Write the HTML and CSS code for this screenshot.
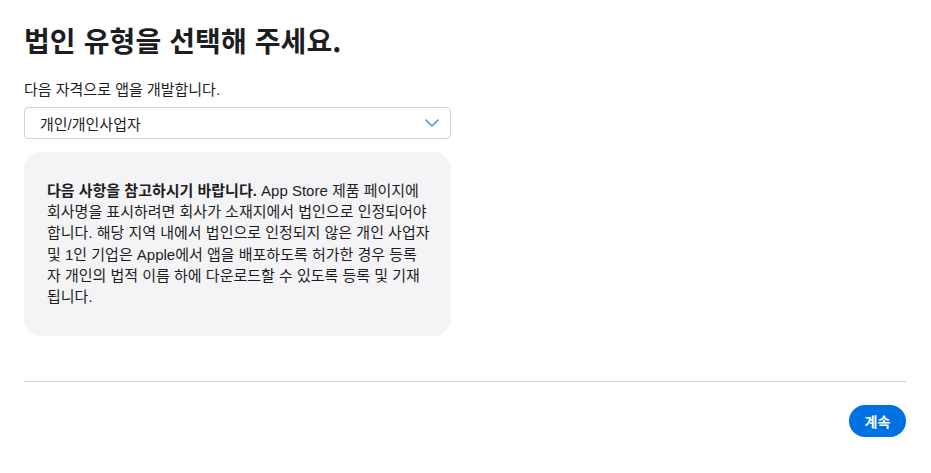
FILE: index.html
```html
<!DOCTYPE html>
<html lang="ko">
<head>
  <meta charset="UTF-8">
  <meta name="viewport" content="width=device-width, initial-scale=1">
  <title>법인 유형 선택</title>
  <link rel="stylesheet" href="styles.css">
</head>
<body>
  <main class="page">
    <h1 class="title">법인 유형을 선택해 주세요.</h1>

    <section class="form">
      <label class="field-label" for="entity">다음 자격으로 앱을 개발합니다.</label>
      <div class="select">
        <span class="select-value" id="entity">개인/개인사업자</span>
        <svg class="chevron" width="14" height="8" viewBox="0 0 14 8" aria-hidden="true">
          <path d="M1 1l6 6 6-6" fill="none" stroke="#3a9ee4" stroke-width="1.6" stroke-linecap="round" stroke-linejoin="round"/>
        </svg>
      </div>

      <div class="notice">
        <p><strong>다음 사항을 참고하시기 바랍니다.</strong> App Store 제품 페이지에<br>
        회사명을 표시하려면 회사가 소재지에서 법인으로 인정되어야<br>
        합니다. 해당 지역 내에서 법인으로 인정되지 않은 개인 사업자<br>
        및 1인 기업은 Apple에서 앱을 배포하도록 허가한 경우 등록<br>
        자 개인의 법적 이름 하에 다운로드할 수 있도록 등록 및 기재<br>
        됩니다.</p>
      </div>
    </section>

    <footer class="actions">
      <button class="btn-primary">계속</button>
    </footer>
  </main>
</body>
</html>
```

FILE: styles.css
```css
:root {
  --text: #1d1d1f;
  --border: #d2d2d7;
  --accent: #0071e3;
  --panel: #f4f4f6;
}
*, *::before, *::after { box-sizing: border-box; margin: 0; padding: 0; }
body {
  background: #fff;
  color: var(--text);
  font-family: "Liberation Sans", "Noto Sans CJK KR", sans-serif;
}
.page {
  padding: 21px 25px 0 24px;
}
.title {
  font-family: "Noto Sans CJK KR", sans-serif;
  font-size: 28px;
  font-weight: 700;
  line-height: 38px;
  letter-spacing: 0.1px;
  margin-bottom: 21px;
}
.form {
  width: 427px;
}
.field-label {
  display: block;
  font-size: 15px;
  line-height: 20px;
  margin-bottom: 7px;
}
.select {
  height: 32px;
  border: 1px solid var(--border);
  border-radius: 4px;
  display: flex;
  align-items: center;
  justify-content: space-between;
  padding: 0 11px 0 15px;
  font-size: 15px;
}
.notice {
  margin-top: 13px;
  background: var(--panel);
  border-radius: 18px;
  padding: 28px 6px 29px 23px;
  font-size: 15px;
  line-height: 21.2px;
  white-space: nowrap;
}
.notice strong { font-weight: 700; }
.actions {
  margin-top: 45px;
  border-top: 1px solid var(--border);
  padding-top: 23px;
  display: flex;
  justify-content: flex-end;
}
.btn-primary {
  background: var(--accent);
  color: #fff;
  border: none;
  border-radius: 16px;
  height: 32px;
  width: 57px;
  font-family: "Noto Sans CJK KR", sans-serif;
  font-size: 14px;
  font-weight: 700;
  cursor: pointer;
}
```
